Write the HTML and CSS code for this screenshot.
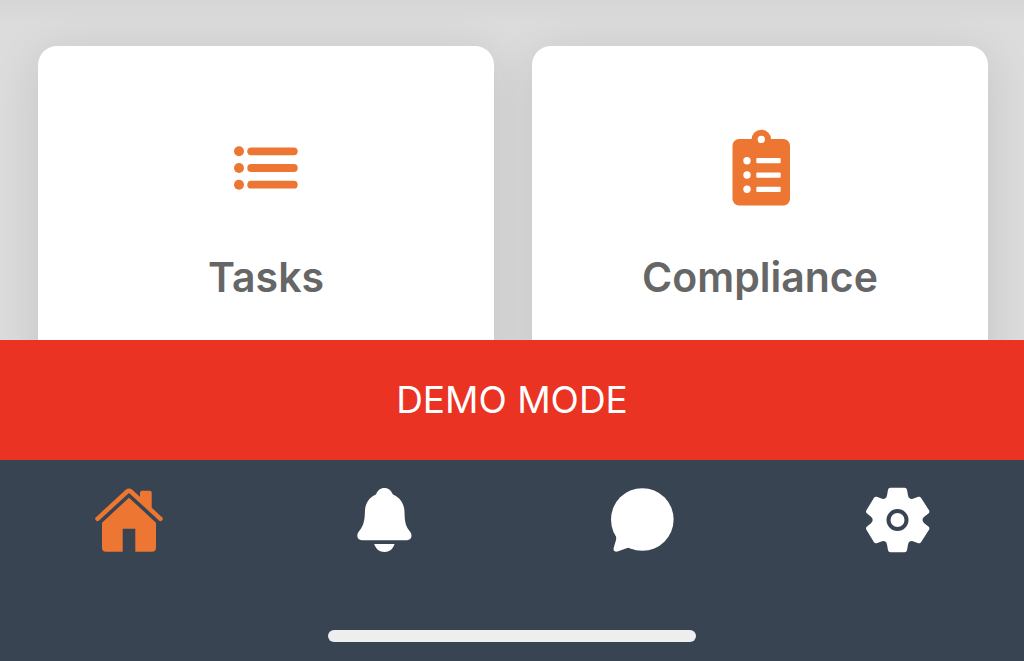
FILE: index.html
```
<!DOCTYPE html>
<html lang="en">
<head>
    <meta charset="UTF-8">
    <meta name="viewport" content="width=device-width, initial-scale=1.0">
    <title>Home</title>
    <link rel="stylesheet" href="styles.css">
</head>
<body>
    <main class="dashboard">
        <div class="card-grid">
            <a class="card" href="#tasks">
                <svg class="card-icon" viewBox="0 0 84 84" aria-hidden="true">
                    <circle cx="15" cy="25.3" r="5"/>
                    <circle cx="15" cy="42" r="5"/>
                    <circle cx="15" cy="58.7" r="5"/>
                    <rect x="23.3" y="21.4" width="50.4" height="7.8" rx="3.9"/>
                    <rect x="23.3" y="38.1" width="50.4" height="7.8" rx="3.9"/>
                    <rect x="23.3" y="54.8" width="50.4" height="7.8" rx="3.9"/>
                </svg>
                <span class="card-title">Tasks</span>
            </a>
            <a class="card" href="#compliance">
                <svg class="card-icon" viewBox="0 0 84 84" aria-hidden="true">
                    <circle cx="43.3" cy="13.4" r="9.7"/>
                    <rect x="14.5" y="13" width="57.5" height="66.5" rx="6.5"/>
                    <g class="cutout">
                        <circle cx="43.3" cy="13.4" r="3.6"/>
                        <circle cx="29" cy="34.7" r="3.7"/>
                        <circle cx="29" cy="49" r="3.7"/>
                        <circle cx="29" cy="63.3" r="3.7"/>
                        <rect x="38.3" y="32" width="24.4" height="5.3" rx="1"/>
                        <rect x="38.3" y="46.4" width="24.4" height="5.3" rx="1"/>
                        <rect x="38.3" y="60.7" width="24.4" height="5.3" rx="1"/>
                    </g>
                </svg>
                <span class="card-title">Compliance</span>
            </a>
        </div>
    </main>

    <div class="demo-banner">DEMO MODE</div>

    <footer class="tab-bar">
        <nav class="tabs">
            <a class="tab active" href="#home" aria-label="Home">
                <svg viewBox="0 0 72 72" aria-hidden="true">
                    <path d="M48 16V8.7Q48 6.7 50 6.7H57.7Q59.7 6.7 59.7 8.7V27Z"/>
                    <path class="roof" d="M5.5 34.8L35.2 7.5Q37 6 38.8 7.5L68.5 34.8"/>
                    <path d="M37 13.7L64 38.7V63.7Q64 67.7 60 67.7H43.3V44.7H30.7V67.7H14Q10 67.7 10 63.7V38.7Z"/>
                </svg>
            </a>
            <a class="tab" href="#notifications" aria-label="Notifications">
                <svg viewBox="0 0 72 72" aria-hidden="true">
                    <path d="M36.4 4C40.5 4 43.3 6.6 45 10.6C52.5 13.8 56.3 20 56.5 28C56.7 36.5 57.3 41.5 61 46.3C62.8 48.4 63.5 50 63.5 51.8C63.5 54.5 61.6 56.2 59 56.2H13.8C11.2 56.2 9.3 54.5 9.3 51.8C9.3 50 10 48.4 11.8 46.3C15.5 41.5 16.7 36.5 16.9 28C17.1 20 20.5 13.8 27.8 10.6C29.5 6.6 32.3 4 36.4 4Z"/>
                    <path d="M26.2 60H46.6C45 65 41.4 68 36.4 68S27.8 65 26.2 60Z"/>
                </svg>
            </a>
            <a class="tab" href="#messages" aria-label="Messages">
                <svg viewBox="0 0 72 72" aria-hidden="true">
                    <circle cx="38.3" cy="35.5" r="31.3"/>
                    <path d="M9.5 48C12 51 12.8 53 12 56L9.8 63.5C8.8 66.5 10.5 68.2 13.5 67.5L22.5 64.2Q25 63.2 28 65L36 50Z"/>
                </svg>
            </a>
            <a class="tab" href="#settings" aria-label="Settings">
                <svg viewBox="0 0 72 72" aria-hidden="true">
                    <path d="M30.5 3.7H44.5Q46.6 3.7 47 5.7L48 11.5Q48.8 15.5 53 14.8L58.3 12.8Q60 12.3 61 13.8L69 26.3Q70 28 68.7 29.2L64.2 32.8Q60.8 36 64.2 39.2L68.7 42.8Q70 44 69 45.7L61 58.2Q60 59.7 58.3 59.2L53 57.2Q48.8 56.5 48 60.5L47 66.3Q46.6 68.3 44.5 68.3H30.5Q28.4 68.3 28 66.3L27 60.5Q26.2 56.5 22 57.2L16.7 59.2Q15 59.7 14 58.2L6.4 45.7Q5.4 44 6.7 42.8L11 39.2Q14.4 36 11 32.8L6.7 29.2Q5.4 28 6.4 26.3L14 13.8Q15 12.3 16.7 12.8L22 14.8Q26.2 15.5 27 11.5L28 5.7Q28.4 3.7 30.5 3.7Z"/>
                    <circle class="ring" cx="37.5" cy="36" r="9"/>
                </svg>
            </a>
        </nav>
        <div class="home-indicator"></div>
    </footer>
</body>
</html>
```
FILE: styles.css
```
* {
    box-sizing: border-box;
}

body {
    margin: 0;
    height: 100vh;
    display: flex;
    flex-direction: column;
    background: #dcdcdc;
    font-family: Inter, 'Liberation Sans', sans-serif;
}

a {
    color: inherit;
    text-decoration: none;
}

.dashboard {
    flex: 1;
    min-height: 0;
    overflow: hidden;
    padding: 46px 36px 0 38px;
    background: linear-gradient(rgba(0, 0, 0, 0.03), transparent 24px);
}

.card-grid {
    display: grid;
    grid-template-columns: 1fr 1fr;
    gap: 38px;
}

.card {
    display: flex;
    flex-direction: column;
    align-items: center;
    gap: 40px;
    padding: 80px 20px;
    background: #fff;
    border-radius: 19px;
    box-shadow: 0 8px 48px rgba(0, 0, 0, 0.11);
}

.card-icon {
    width: 84px;
    height: 84px;
    fill: #ec7632;
}

.cutout {
    fill: #fff;
}

.card-title {
    font-size: 41px;
    font-weight: 600;
    line-height: 54px;
    color: #666;
}

.demo-banner {
    padding: 36px 20px;
    background: #ea3323;
    color: #fff;
    font-size: 37px;
    line-height: 48px;
    text-align: center;
}

.tab-bar {
    padding: 24px 0 19px;
    background: #394452;
}

.tabs {
    display: flex;
}

.tab {
    flex: 1;
    display: flex;
    justify-content: center;
    color: #fff;
}

.tab.active {
    color: #ec7632;
}

.tab svg {
    width: 72px;
    height: 72px;
    fill: currentColor;
}

.tab .roof {
    fill: none;
    stroke: currentColor;
    stroke-width: 4.5;
    stroke-linecap: round;
}

.tab .ring {
    fill: none;
    stroke: #394452;
    stroke-width: 4;
}

.home-indicator {
    width: 36%;
    height: 12px;
    margin: 74px auto 0;
    border-radius: 6px;
    background: #eee;
}
```
